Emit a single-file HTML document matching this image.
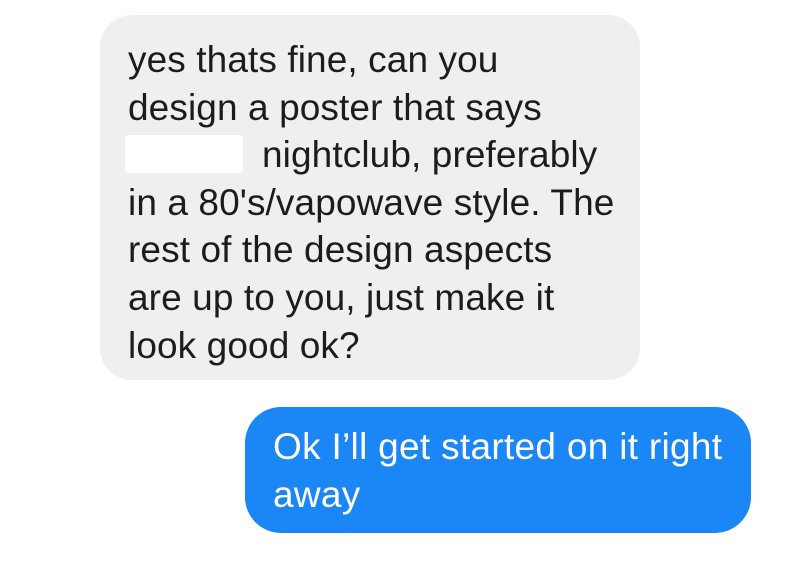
<!DOCTYPE html>
<html><head><style>
body{margin:0;width:800px;height:573px;background:#fff;position:relative;overflow:hidden;font-family:"Liberation Sans",sans-serif}
.g{position:absolute;left:100px;top:15px;width:540px;height:365px;background:#efefef;border-radius:32px}
.gt{position:absolute;left:128px;top:36px;font-size:37px;line-height:47.6px;color:#1c1c1c;white-space:pre;letter-spacing:0.1px}
.w{position:absolute;left:125px;top:135px;width:118px;height:38px;background:#fff;border-radius:3px}
.b{position:absolute;left:245px;top:407px;width:506px;height:126px;background:#1b86f6;border-radius:36px}
.bt{position:absolute;left:273px;top:423px;font-size:37px;line-height:47.5px;color:#fff;white-space:pre;letter-spacing:0.3px}
.in{display:inline-block;width:134px}
</style></head><body>
<div class="g"></div>
<div class="gt">yes thats fine, can you
design a poster that says
<span class="in"></span>nightclub, preferably
in a 80's/vapowave style. The
rest of the design aspects
are up to you, just make it
look good ok?</div>
<div class="w"></div>
<div class="b"></div>
<div class="bt">Ok I’ll get started on it right
away</div>
</body></html>
